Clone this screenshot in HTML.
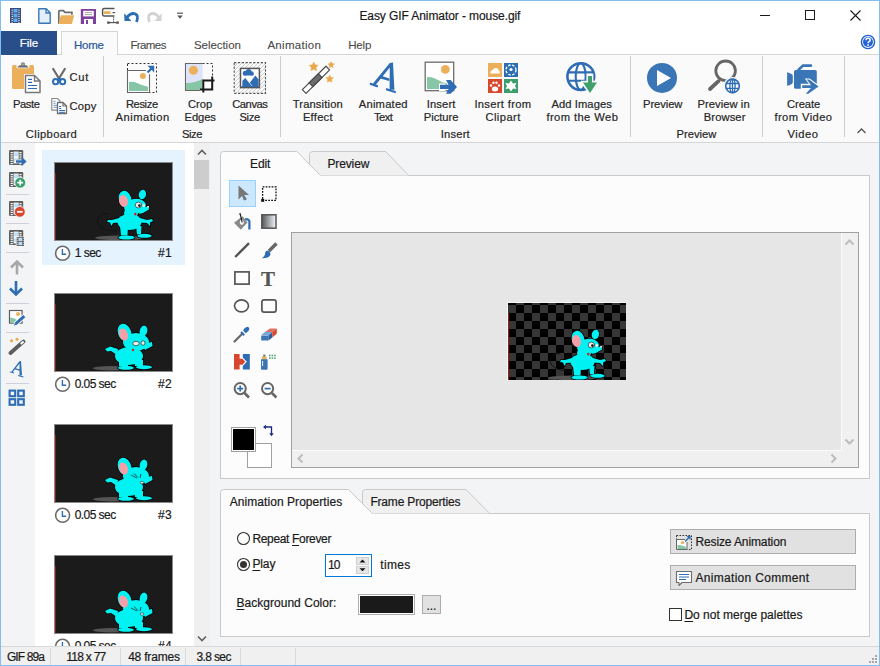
<!DOCTYPE html><html><head><meta charset="utf-8"><style>html,body{margin:0;padding:0;width:880px;height:666px;overflow:hidden;background:#f3f4f6}#w{position:relative;width:880px;height:666px;overflow:hidden}#w>div,#w>svg,#w>span{position:absolute}.t{font-family:"Liberation Sans", sans-serif;white-space:nowrap;line-height:16px;-webkit-text-stroke:0.2px currentColor}</style></head><body><div id="w"><svg width="0" height="0" style="left:0;top:0"><defs><symbol id="mouse0" width="118" height="77" viewBox="0 0 118 77"><g transform="translate(0,0)"><ellipse cx="64" cy="74.8" rx="24" ry="2.3" fill="#555"/><path d="M62 68C48 68 40 62 43 55C45 51 49 50 52 51" fill="none" stroke="#111" stroke-width="1"/><g fill="#000" stroke="#000" stroke-width="1.4"><ellipse cx="74.5" cy="59.0" rx="12" ry="8"/><ellipse cx="76" cy="50.0" rx="7" ry="6"/><ellipse cx="80" cy="43.5" rx="11" ry="7.5" transform="rotate(-10 80 43.5)"/><path d="M85 46L93.5 43L94 46.5L88 50L84 51Z"/><ellipse cx="70" cy="36" rx="6.3" ry="8.3" transform="rotate(-15 70 36)"/><ellipse cx="87.4" cy="31.5" rx="3.6" ry="4.8" transform="rotate(15 87.4 31.5)"/><path d="M64 55L57 57L53 57L52 59L55 59.5L56.5 63L58 60L64 59.5Z"/><path d="M85 55L92 57L97 56L98 58L95 59.5L95 63L92 60L85 59.5Z"/><path d="M65 63L73 63L72.5 72.5L66 72.5Z"/><ellipse cx="71.5" cy="74.5" rx="8.2" ry="2"/><path d="M81 63L86.5 63L86 71L82 71.5Z"/><ellipse cx="89.5" cy="72.8" rx="7.3" ry="2"/></g><g fill="#00f2f2"><ellipse cx="74.5" cy="59.0" rx="12" ry="8"/><ellipse cx="76" cy="50.0" rx="7" ry="6"/><ellipse cx="80" cy="43.5" rx="11" ry="7.5" transform="rotate(-10 80 43.5)"/><path d="M85 46L93.5 43L94 46.5L88 50L84 51Z"/><ellipse cx="70" cy="36" rx="6.3" ry="8.3" transform="rotate(-15 70 36)"/><ellipse cx="87.4" cy="31.5" rx="3.6" ry="4.8" transform="rotate(15 87.4 31.5)"/><path d="M64 55L57 57L53 57L52 59L55 59.5L56.5 63L58 60L64 59.5Z"/><path d="M85 55L92 57L97 56L98 58L95 59.5L95 63L92 60L85 59.5Z"/><path d="M65 63L73 63L72.5 72.5L66 72.5Z"/><ellipse cx="71.5" cy="74.5" rx="8.2" ry="2"/><path d="M81 63L86.5 63L86 71L82 71.5Z"/><ellipse cx="89.5" cy="72.8" rx="7.3" ry="2"/></g><ellipse cx="68.5" cy="38" rx="4.4" ry="6" transform="rotate(-15 68.5 38)" fill="#f4a0a8"/><ellipse cx="83.4" cy="42" rx="3.2" ry="2.9" fill="#f0f0f0" stroke="#111" stroke-width="0.6"/><circle cx="84.4" cy="42.6" r="1.3" fill="#111"/><ellipse cx="88.8" cy="42.4" rx="1.2" ry="1.6" fill="#f0f0f0"/><circle cx="93.1" cy="43.7" r="1" fill="#ddd"/><circle cx="80.3" cy="51.1" r="1.3" fill="#d02020"/></g></symbol><symbol id="mouse1" width="118" height="77" viewBox="0 0 118 77"><ellipse cx="56" cy="74.2" rx="18" ry="2.2" fill="#555"/><g fill="#000" stroke="#000" stroke-width="1.4"><ellipse cx="74" cy="62" rx="14" ry="9"/><ellipse cx="81" cy="48" rx="13" ry="9"/><path d="M88 50L97 48L97.5 52L90 56Z"/><ellipse cx="69.5" cy="38.5" rx="6.6" ry="9" transform="rotate(-20 69.5 38.5)"/><ellipse cx="88.5" cy="37" rx="3.8" ry="5.5" transform="rotate(15 88.5 37)"/><path d="M63 55L55 52.5L50 55L52 57.5L56 57L62 61Z"/><path d="M64 66H73V72.5H64Z"/><ellipse cx="71" cy="73.8" rx="8" ry="2"/><path d="M80 66H88V72H80Z"/><ellipse cx="89" cy="73.2" rx="8" ry="2"/></g><g fill="#00f2f2"><ellipse cx="74" cy="62" rx="14" ry="9"/><ellipse cx="81" cy="48" rx="13" ry="9"/><path d="M88 50L97 48L97.5 52L90 56Z"/><ellipse cx="69.5" cy="38.5" rx="6.6" ry="9" transform="rotate(-20 69.5 38.5)"/><ellipse cx="88.5" cy="37" rx="3.8" ry="5.5" transform="rotate(15 88.5 37)"/><path d="M63 55L55 52.5L50 55L52 57.5L56 57L62 61Z"/><path d="M64 66H73V72.5H64Z"/><ellipse cx="71" cy="73.8" rx="8" ry="2"/><path d="M80 66H88V72H80Z"/><ellipse cx="89" cy="73.2" rx="8" ry="2"/></g><ellipse cx="68.5" cy="40.5" rx="4.3" ry="6.3" transform="rotate(-20 68.5 40.5)" fill="#f4a0a8"/><ellipse cx="81" cy="49.5" rx="3.2" ry="2.2" fill="#eee" stroke="#111" stroke-width="0.6"/><ellipse cx="88" cy="49" rx="2" ry="2.2" fill="#eee" stroke="#111" stroke-width="0.6"/><circle cx="78" cy="56" r="1.2" fill="#d02020"/></symbol><symbol id="mouse2" width="118" height="77" viewBox="0 0 118 77"><ellipse cx="56" cy="74.2" rx="18" ry="2.2" fill="#555"/><g fill="#000" stroke="#000" stroke-width="1.4"><ellipse cx="74" cy="62" rx="14" ry="9"/><ellipse cx="81" cy="51" rx="13" ry="9"/><path d="M88 53L97 51L97.5 55L90 59Z"/><ellipse cx="69.5" cy="41.5" rx="6.6" ry="9" transform="rotate(-20 69.5 41.5)"/><ellipse cx="88.5" cy="40" rx="3.8" ry="5.5" transform="rotate(15 88.5 40)"/><path d="M63 55L55 52.5L50 55L52 57.5L56 57L62 61Z"/><path d="M64 66H73V72.5H64Z"/><ellipse cx="71" cy="73.8" rx="8" ry="2"/><path d="M80 66H88V72H80Z"/><ellipse cx="89" cy="73.2" rx="8" ry="2"/></g><g fill="#00f2f2"><ellipse cx="74" cy="62" rx="14" ry="9"/><ellipse cx="81" cy="51" rx="13" ry="9"/><path d="M88 53L97 51L97.5 55L90 59Z"/><ellipse cx="69.5" cy="41.5" rx="6.6" ry="9" transform="rotate(-20 69.5 41.5)"/><ellipse cx="88.5" cy="40" rx="3.8" ry="5.5" transform="rotate(15 88.5 40)"/><path d="M63 55L55 52.5L50 55L52 57.5L56 57L62 61Z"/><path d="M64 66H73V72.5H64Z"/><ellipse cx="71" cy="73.8" rx="8" ry="2"/><path d="M80 66H88V72H80Z"/><ellipse cx="89" cy="73.2" rx="8" ry="2"/></g><ellipse cx="68.5" cy="43.5" rx="4.3" ry="6.3" transform="rotate(-20 68.5 43.5)" fill="#f4a0a8"/><path d="M76 50L82 53M79 48.5L83 52.5M86 49L85 53" stroke="#111" stroke-width="0.7"/><ellipse cx="87" cy="57.6" rx="1.8" ry="1.2" fill="#eee" stroke="#111" stroke-width="0.5"/></symbol><symbol id="mouse3" width="118" height="77" viewBox="0 0 118 77"><ellipse cx="56" cy="74.2" rx="18" ry="2.2" fill="#555"/><g fill="#000" stroke="#000" stroke-width="1.4"><ellipse cx="74" cy="62" rx="14" ry="9"/><ellipse cx="81" cy="53" rx="13" ry="9"/><path d="M88 55L97 53L97.5 57L90 61Z"/><ellipse cx="69.5" cy="43.5" rx="6.6" ry="9" transform="rotate(-20 69.5 43.5)"/><ellipse cx="88.5" cy="42" rx="3.8" ry="5.5" transform="rotate(15 88.5 42)"/><path d="M63 55L55 52.5L50 55L52 57.5L56 57L62 61Z"/><path d="M64 66H73V72.5H64Z"/><ellipse cx="71" cy="73.8" rx="8" ry="2"/><path d="M80 66H88V72H80Z"/><ellipse cx="89" cy="73.2" rx="8" ry="2"/></g><g fill="#00f2f2"><ellipse cx="74" cy="62" rx="14" ry="9"/><ellipse cx="81" cy="53" rx="13" ry="9"/><path d="M88 55L97 53L97.5 57L90 61Z"/><ellipse cx="69.5" cy="43.5" rx="6.6" ry="9" transform="rotate(-20 69.5 43.5)"/><ellipse cx="88.5" cy="42" rx="3.8" ry="5.5" transform="rotate(15 88.5 42)"/><path d="M63 55L55 52.5L50 55L52 57.5L56 57L62 61Z"/><path d="M64 66H73V72.5H64Z"/><ellipse cx="71" cy="73.8" rx="8" ry="2"/><path d="M80 66H88V72H80Z"/><ellipse cx="89" cy="73.2" rx="8" ry="2"/></g><ellipse cx="68.5" cy="45.5" rx="4.3" ry="6.3" transform="rotate(-20 68.5 45.5)" fill="#f4a0a8"/><path d="M76 52L82 55M79 50.5L83 54.5M86 51L85 55" stroke="#111" stroke-width="0.7"/><ellipse cx="87" cy="58.0" rx="1.8" ry="1.2" fill="#eee" stroke="#111" stroke-width="0.5"/></symbol></defs></svg><div style="left:0px;top:0px;width:880px;height:666px;background:#f3f4f6"></div>
<div style="left:0px;top:0px;width:880px;height:54px;background:#ffffff"></div>
<div style="left:0px;top:54px;width:880px;height:88px;background:#fafafa"></div>
<div style="left:0px;top:54px;width:880px;height:1px;background:#d5d5d5"></div>
<div style="left:0px;top:142px;width:880px;height:1px;background:#d5d5d5"></div>
<div style="left:1px;top:143px;width:34px;height:503px;background:#f3f4f6"></div>
<div style="left:35px;top:143px;width:159px;height:503px;background:#ffffff"></div>
<div style="left:194px;top:143px;width:16px;height:503px;background:#f0f0f0"></div>
<span class="t" style="left:359.40px;top:8px;font-size:12px;letter-spacing:-0.085px;color:#1a1a1a;">Easy GIF Animator - mouse.gif</span>
<div style="left:760px;top:15px;width:10px;height:1px;background:#1a1a1a"></div>
<div style="left:805px;top:10px;width:10px;height:10px;border:1px solid #1a1a1a;box-sizing:border-box"></div>
<svg style="left:850px;top:10px" width="11" height="11" viewBox="0 0 11 11"><path d="M0.5 0.5L10.5 10.5M10.5 0.5L0.5 10.5" stroke="#1a1a1a" stroke-width="1.1"/></svg>
<div style="left:1px;top:31px;width:56px;height:24px;background:#294f8b"></div>
<span class="t" style="left:19.80px;top:35px;font-size:11.5px;letter-spacing:-0.043px;color:#ffffff;">File</span>
<div style="left:61px;top:31px;width:57px;height:24px;background:#fafafa;border:1px solid #d5d5d5;border-bottom:none;box-sizing:border-box"></div>
<span class="t" style="left:74.00px;top:37px;font-size:11.5px;letter-spacing:-0.225px;color:#2b579a;">Home</span>
<span class="t" style="left:130.40px;top:37px;font-size:11.5px;letter-spacing:-0.594px;color:#4a4a4a;-webkit-text-stroke:0.1px currentColor">Frames</span>
<span class="t" style="left:193.90px;top:37px;font-size:11.5px;letter-spacing:-0.038px;color:#4a4a4a;-webkit-text-stroke:0.1px currentColor">Selection</span>
<span class="t" style="left:267.40px;top:37px;font-size:11.5px;letter-spacing:0.296px;color:#4a4a4a;-webkit-text-stroke:0.1px currentColor">Animation</span>
<span class="t" style="left:348.20px;top:37px;font-size:11.5px;letter-spacing:-0.150px;color:#4a4a4a;-webkit-text-stroke:0.1px currentColor">Help</span>
<span class="t" style="left:12.90px;top:96px;font-size:11.2px;letter-spacing:-0.410px;color:#262626;">Paste</span>
<span class="t" style="left:69.40px;top:69px;font-size:11.2px;letter-spacing:0.786px;color:#262626;">Cut</span>
<span class="t" style="left:69.40px;top:98px;font-size:11.2px;letter-spacing:0.285px;color:#262626;">Copy</span>
<span class="t" style="left:25.80px;top:126px;font-size:11.2px;letter-spacing:0.383px;color:#262626;">Clipboard</span>
<span class="t" style="left:125.90px;top:96px;font-size:11.2px;letter-spacing:-0.387px;color:#262626;">Resize</span>
<span class="t" style="left:115.60px;top:109px;font-size:11.2px;letter-spacing:0.475px;color:#262626;">Animation</span>
<span class="t" style="left:187.90px;top:96px;font-size:11.2px;letter-spacing:0.009px;color:#262626;">Crop</span>
<span class="t" style="left:184.60px;top:109px;font-size:11.2px;letter-spacing:-0.114px;color:#262626;">Edges</span>
<span class="t" style="left:232.20px;top:96px;font-size:11.2px;letter-spacing:-0.435px;color:#262626;">Canvas</span>
<span class="t" style="left:239.40px;top:109px;font-size:11.2px;letter-spacing:-0.329px;color:#262626;">Size</span>
<span class="t" style="left:182.10px;top:126px;font-size:11.2px;letter-spacing:-0.496px;color:#262626;">Size</span>
<span class="t" style="left:292.70px;top:96px;font-size:11.2px;letter-spacing:0.149px;color:#262626;">Transition</span>
<span class="t" style="left:302.90px;top:109px;font-size:11.2px;letter-spacing:0.254px;color:#262626;">Effect</span>
<span class="t" style="left:358.80px;top:96px;font-size:11.2px;letter-spacing:0.212px;color:#262626;">Animated</span>
<span class="t" style="left:373.90px;top:109px;font-size:11.2px;letter-spacing:-0.513px;color:#262626;">Text</span>
<span class="t" style="left:426.70px;top:96px;font-size:11.2px;letter-spacing:0.138px;color:#262626;">Insert</span>
<span class="t" style="left:423.80px;top:109px;font-size:11.2px;letter-spacing:-0.043px;color:#262626;">Picture</span>
<span class="t" style="left:474.40px;top:96px;font-size:11.2px;letter-spacing:0.318px;color:#262626;">Insert from</span>
<span class="t" style="left:485.40px;top:109px;font-size:11.2px;letter-spacing:0.440px;color:#262626;">Clipart</span>
<span class="t" style="left:551.40px;top:96px;font-size:11.2px;letter-spacing:0.082px;color:#262626;">Add Images</span>
<span class="t" style="left:546.40px;top:109px;font-size:11.2px;letter-spacing:0.417px;color:#262626;">from the Web</span>
<span class="t" style="left:440.70px;top:126px;font-size:11.2px;letter-spacing:0.198px;color:#262626;">Insert</span>
<span class="t" style="left:643.00px;top:96px;font-size:11.2px;letter-spacing:-0.072px;color:#262626;">Preview</span>
<span class="t" style="left:697.40px;top:96px;font-size:11.2px;letter-spacing:0.071px;color:#262626;">Preview in</span>
<span class="t" style="left:703.80px;top:109px;font-size:11.2px;letter-spacing:0.088px;color:#262626;">Browser</span>
<span class="t" style="left:787.10px;top:96px;font-size:11.2px;letter-spacing:-0.103px;color:#262626;">Create</span>
<span class="t" style="left:774.40px;top:109px;font-size:11.2px;letter-spacing:0.417px;color:#262626;">from Video</span>
<span class="t" style="left:676.40px;top:126px;font-size:11.2px;letter-spacing:0.028px;color:#262626;">Preview</span>
<span class="t" style="left:787.40px;top:126px;font-size:11.2px;letter-spacing:0.515px;color:#262626;">Video</span>
<div style="left:103px;top:56px;width:1px;height:81px;background:#cbcbcb"></div>
<div style="left:280px;top:56px;width:1px;height:81px;background:#cbcbcb"></div>
<div style="left:630px;top:56px;width:1px;height:81px;background:#cbcbcb"></div>
<div style="left:762px;top:56px;width:1px;height:81px;background:#cbcbcb"></div>
<div style="left:844px;top:56px;width:1px;height:81px;background:#cbcbcb"></div>
<svg style="left:856px;top:127px" width="11" height="8" viewBox="0 0 11 8"><path d="M1.5 6L5.5 2L9.5 6" fill="none" stroke="#555" stroke-width="1.3"/></svg>
<div style="left:6px;top:194px;width:23px;height:1px;background:#cfd0dc"></div>
<div style="left:6px;top:223px;width:23px;height:1px;background:#cfd0dc"></div>
<div style="left:6px;top:252px;width:23px;height:1px;background:#cfd0dc"></div>
<div style="left:6px;top:303px;width:23px;height:1px;background:#cfd0dc"></div>
<div style="left:6px;top:332px;width:23px;height:1px;background:#cfd0dc"></div>
<div style="left:6px;top:383px;width:23px;height:1px;background:#cfd0dc"></div>
<div style="left:42px;top:150px;width:143px;height:115px;background:#e5f3ff"></div>
<svg style="left:54px;top:162px" width="119" height="79" viewBox="0 0 119 79"><rect x="0.5" y="0.5" width="118" height="78" fill="#1b1b1b" stroke="#8a8a8a"/><rect x="1" y="11" width="1" height="67" fill="#8a1a0e"/><use href="#mouse0" x="1" y="1"/></svg>
<svg style="left:54px;top:245px" width="18" height="17" viewBox="0 0 18 17"><circle cx="8.6" cy="8.3" r="7" fill="#fff" stroke="#6b6b6b" stroke-width="1.6"/><path d="M8.4 4V9.2H12.2" fill="none" stroke="#2e6db4" stroke-width="1.4"/></svg>
<span class="t" style="left:74.70px;top:245px;font-size:12px;letter-spacing:-0.520px;color:#1a1a1a;">1 sec</span>
<span class="t" style="left:158.10px;top:245px;font-size:12px;letter-spacing:0.154px;color:#1a1a1a;">#1</span>
<svg style="left:54px;top:293px" width="119" height="79" viewBox="0 0 119 79"><rect x="0.5" y="0.5" width="118" height="78" fill="#1b1b1b" stroke="#8a8a8a"/><rect x="1" y="11" width="1" height="67" fill="#8a1a0e"/><use href="#mouse1" x="1" y="1"/></svg>
<svg style="left:54px;top:376px" width="18" height="17" viewBox="0 0 18 17"><circle cx="8.6" cy="8.3" r="7" fill="#fff" stroke="#6b6b6b" stroke-width="1.6"/><path d="M8.4 4V9.2H12.2" fill="none" stroke="#2e6db4" stroke-width="1.4"/></svg>
<span class="t" style="left:74.70px;top:376px;font-size:12px;letter-spacing:-0.551px;color:#1a1a1a;">0.05 sec</span>
<span class="t" style="left:158.10px;top:376px;font-size:12px;letter-spacing:0.154px;color:#1a1a1a;">#2</span>
<svg style="left:54px;top:424px" width="119" height="79" viewBox="0 0 119 79"><rect x="0.5" y="0.5" width="118" height="78" fill="#1b1b1b" stroke="#8a8a8a"/><rect x="1" y="11" width="1" height="67" fill="#8a1a0e"/><use href="#mouse2" x="1" y="1"/></svg>
<svg style="left:54px;top:507px" width="18" height="17" viewBox="0 0 18 17"><circle cx="8.6" cy="8.3" r="7" fill="#fff" stroke="#6b6b6b" stroke-width="1.6"/><path d="M8.4 4V9.2H12.2" fill="none" stroke="#2e6db4" stroke-width="1.4"/></svg>
<span class="t" style="left:74.70px;top:507px;font-size:12px;letter-spacing:-0.551px;color:#1a1a1a;">0.05 sec</span>
<span class="t" style="left:158.10px;top:507px;font-size:12px;letter-spacing:0.154px;color:#1a1a1a;">#3</span>
<svg style="left:54px;top:555px" width="119" height="79" viewBox="0 0 119 79"><rect x="0.5" y="0.5" width="118" height="78" fill="#1b1b1b" stroke="#8a8a8a"/><rect x="1" y="11" width="1" height="67" fill="#8a1a0e"/><use href="#mouse3" x="1" y="1"/></svg>
<svg style="left:54px;top:638px" width="18" height="17" viewBox="0 0 18 17"><circle cx="8.6" cy="8.3" r="7" fill="#fff" stroke="#6b6b6b" stroke-width="1.6"/><path d="M8.4 4V9.2H12.2" fill="none" stroke="#2e6db4" stroke-width="1.4"/></svg>
<span class="t" style="left:74.70px;top:638px;font-size:12px;letter-spacing:-0.551px;color:#1a1a1a;">0.05 sec</span>
<span class="t" style="left:158.10px;top:638px;font-size:12px;letter-spacing:0.154px;color:#1a1a1a;">#4</span>
<svg style="left:196px;top:148px" width="12" height="9" viewBox="0 0 12 9"><path d="M2 6.5L6 2.5L10 6.5" fill="none" stroke="#606060" stroke-width="1.6"/></svg>
<div style="left:194px;top:160px;width:15px;height:29px;background:#cdcdcd"></div>
<svg style="left:196px;top:634px" width="12" height="9" viewBox="0 0 12 9"><path d="M2 2.5L6 6.5L10 2.5" fill="none" stroke="#606060" stroke-width="1.6"/></svg>
<div style="left:220px;top:175px;width:650px;height:304px;background:#fcfcfc;border:1px solid #c9c9c9;box-sizing:border-box"></div>
<svg style="left:215px;top:146px" width="200" height="32" viewBox="0 0 200 32"><path d="M94.5 29.5V8.5Q94.5 5.5 97.5 5.5H170.6L193.75 29.5" fill="#f0f0f0" stroke="#c9c9c9"/><path d="M5.5 29.5V8.5Q5.5 5.5 8.5 5.5H81.9L105.4 29.5" fill="#fcfcfc" stroke="#c9c9c9"/><rect x="6" y="29" width="99" height="3" fill="#fcfcfc"/></svg>
<span class="t" style="left:250.00px;top:156px;font-size:12px;letter-spacing:-0.092px;color:#1a1a1a;">Edit</span>
<span class="t" style="left:327.40px;top:156px;font-size:12px;letter-spacing:-0.113px;color:#1a1a1a;">Preview</span>
<div style="left:229px;top:180px;width:27px;height:27px;background:#cce8ff;border:1px solid #99d1ff;box-sizing:border-box"></div>
<div style="left:291px;top:232px;width:568px;height:236px;background:#e6e6e6;border:1px solid #a0a0a0;box-sizing:border-box"></div>
<div style="left:841px;top:233px;width:17px;height:234px;background:#fbfbfb"></div>
<div style="left:292px;top:450px;width:566px;height:17px;background:#fbfbfb"></div>
<div style="left:842px;top:233px;width:16px;height:234px;background:#f0f0f0"></div>
<div style="left:292px;top:451px;width:566px;height:16px;background:#f0f0f0"></div>
<svg style="left:844px;top:238px" width="12" height="9" viewBox="0 0 12 9"><path d="M1.5 6.5L5.5 2.5L9.5 6.5" fill="none" stroke="#bdbdbd" stroke-width="2"/></svg>
<svg style="left:844px;top:437px" width="12" height="9" viewBox="0 0 12 9"><path d="M1.5 2.5L5.5 6.5L9.5 2.5" fill="none" stroke="#bdbdbd" stroke-width="2"/></svg>
<svg style="left:296px;top:453px" width="9" height="12" viewBox="0 0 9 12"><path d="M6.5 1.5L2.5 5.5L6.5 9.5" fill="none" stroke="#bdbdbd" stroke-width="2"/></svg>
<svg style="left:829px;top:453px" width="9" height="12" viewBox="0 0 9 12"><path d="M2.5 1.5L6.5 5.5L2.5 9.5" fill="none" stroke="#bdbdbd" stroke-width="2"/></svg>
<div style="left:507px;top:302px;width:120px;height:1px;background:#f6f6f6"></div>
<div style="left:507px;top:302px;width:1px;height:79px;background:#f6f6f6"></div>
<svg style="left:508px;top:303px" width="118" height="77" viewBox="0 0 118 77"><rect width="118" height="77" fill="#000"/><g fill="#363636"><rect x="8" y="-6" width="8" height="8"/><rect x="24" y="-6" width="8" height="8"/><rect x="40" y="-6" width="8" height="8"/><rect x="56" y="-6" width="8" height="8"/><rect x="72" y="-6" width="8" height="8"/><rect x="88" y="-6" width="8" height="8"/><rect x="104" y="-6" width="8" height="8"/><rect x="0" y="2" width="8" height="8"/><rect x="16" y="2" width="8" height="8"/><rect x="32" y="2" width="8" height="8"/><rect x="48" y="2" width="8" height="8"/><rect x="64" y="2" width="8" height="8"/><rect x="80" y="2" width="8" height="8"/><rect x="96" y="2" width="8" height="8"/><rect x="112" y="2" width="8" height="8"/><rect x="8" y="10" width="8" height="8"/><rect x="24" y="10" width="8" height="8"/><rect x="40" y="10" width="8" height="8"/><rect x="56" y="10" width="8" height="8"/><rect x="72" y="10" width="8" height="8"/><rect x="88" y="10" width="8" height="8"/><rect x="104" y="10" width="8" height="8"/><rect x="0" y="18" width="8" height="8"/><rect x="16" y="18" width="8" height="8"/><rect x="32" y="18" width="8" height="8"/><rect x="48" y="18" width="8" height="8"/><rect x="64" y="18" width="8" height="8"/><rect x="80" y="18" width="8" height="8"/><rect x="96" y="18" width="8" height="8"/><rect x="112" y="18" width="8" height="8"/><rect x="8" y="26" width="8" height="8"/><rect x="24" y="26" width="8" height="8"/><rect x="40" y="26" width="8" height="8"/><rect x="56" y="26" width="8" height="8"/><rect x="72" y="26" width="8" height="8"/><rect x="88" y="26" width="8" height="8"/><rect x="104" y="26" width="8" height="8"/><rect x="0" y="34" width="8" height="8"/><rect x="16" y="34" width="8" height="8"/><rect x="32" y="34" width="8" height="8"/><rect x="48" y="34" width="8" height="8"/><rect x="64" y="34" width="8" height="8"/><rect x="80" y="34" width="8" height="8"/><rect x="96" y="34" width="8" height="8"/><rect x="112" y="34" width="8" height="8"/><rect x="8" y="42" width="8" height="8"/><rect x="24" y="42" width="8" height="8"/><rect x="40" y="42" width="8" height="8"/><rect x="56" y="42" width="8" height="8"/><rect x="72" y="42" width="8" height="8"/><rect x="88" y="42" width="8" height="8"/><rect x="104" y="42" width="8" height="8"/><rect x="0" y="50" width="8" height="8"/><rect x="16" y="50" width="8" height="8"/><rect x="32" y="50" width="8" height="8"/><rect x="48" y="50" width="8" height="8"/><rect x="64" y="50" width="8" height="8"/><rect x="80" y="50" width="8" height="8"/><rect x="96" y="50" width="8" height="8"/><rect x="112" y="50" width="8" height="8"/><rect x="8" y="58" width="8" height="8"/><rect x="24" y="58" width="8" height="8"/><rect x="40" y="58" width="8" height="8"/><rect x="56" y="58" width="8" height="8"/><rect x="72" y="58" width="8" height="8"/><rect x="88" y="58" width="8" height="8"/><rect x="104" y="58" width="8" height="8"/><rect x="0" y="66" width="8" height="8"/><rect x="16" y="66" width="8" height="8"/><rect x="32" y="66" width="8" height="8"/><rect x="48" y="66" width="8" height="8"/><rect x="64" y="66" width="8" height="8"/><rect x="80" y="66" width="8" height="8"/><rect x="96" y="66" width="8" height="8"/><rect x="112" y="66" width="8" height="8"/><rect x="8" y="74" width="8" height="8"/><rect x="24" y="74" width="8" height="8"/><rect x="40" y="74" width="8" height="8"/><rect x="56" y="74" width="8" height="8"/><rect x="72" y="74" width="8" height="8"/><rect x="88" y="74" width="8" height="8"/><rect x="104" y="74" width="8" height="8"/></g><rect x="0" y="10" width="1" height="67" fill="#a01a0e"/><use href="#mouse0"/></svg>
<div style="left:247px;top:443px;width:25px;height:25px;background:#fff;border:1px solid #a0a0a0;box-sizing:border-box"></div>
<div style="left:231px;top:427px;width:25px;height:25px;background:#000;border:1px solid #a0a0a0;box-shadow:inset 0 0 0 1px #fff;box-sizing:border-box"></div>
<svg style="left:262px;top:424px" width="13" height="13" viewBox="0 0 13 13"><path d="M3 3H9.5V10" fill="none" stroke="#1a2a80" stroke-width="1.3"/><path d="M1 3L4 0.8V5.2Z M9.5 12.2L7.3 9.2H11.7Z" fill="#1a2a80"/></svg>
<div style="left:220px;top:513px;width:650px;height:124px;background:#fcfcfc;border:1px solid #c9c9c9;box-sizing:border-box"></div>
<svg style="left:215px;top:484px" width="280" height="32" viewBox="0 0 280 32"><path d="M147.5 29.5V8.5Q147.5 5.5 150.5 5.5H251L274.8 29.5" fill="#f0f0f0" stroke="#c9c9c9"/><path d="M5.5 29.5V8.5Q5.5 5.5 8.5 5.5H133.6L157.4 29.5" fill="#fcfcfc" stroke="#c9c9c9"/><rect x="6" y="29" width="151" height="3" fill="#fcfcfc"/></svg>
<span class="t" style="left:229.80px;top:494px;font-size:12px;letter-spacing:0.054px;color:#1a1a1a;">Animation Properties</span>
<span class="t" style="left:370.40px;top:494px;font-size:12px;letter-spacing:-0.179px;color:#1a1a1a;">Frame Properties</span>
<svg style="left:236px;top:531px" width="15" height="15" viewBox="0 0 15 15"><circle cx="7.5" cy="7.5" r="6" fill="#fff" stroke="#333" stroke-width="1.1"/></svg>
<svg style="left:236px;top:557px" width="15" height="15" viewBox="0 0 15 15"><circle cx="7.5" cy="7.5" r="6" fill="#fff" stroke="#333" stroke-width="1.1"/><circle cx="7.5" cy="7.5" r="3.5" fill="#333"/></svg>
<span class="t" style="left:252.40px;top:531px;font-size:12px;letter-spacing:-0.336px;color:#1a1a1a;">Repeat <span style="text-decoration:underline;text-underline-offset:2px">F</span>orever</span>
<span class="t" style="left:252.40px;top:556px;font-size:12px;letter-spacing:-0.115px;color:#1a1a1a;"><span style="text-decoration:underline;text-underline-offset:2px">P</span>lay</span>
<div style="left:325px;top:554px;width:47px;height:23px;background:#fff;border:1px solid #0078d7;box-sizing:border-box"></div>
<div style="left:356px;top:557px;width:13px;height:8px;background:#e6e6e6;border:1px solid #cfcfcf;box-sizing:border-box"></div>
<div style="left:356px;top:566px;width:13px;height:8px;background:#e6e6e6;border:1px solid #cfcfcf;box-sizing:border-box"></div>
<svg style="left:356px;top:557px" width="13" height="17" viewBox="0 0 13 17"><path d="M3.5 5.6L6.5 2.6L9.5 5.6Z M3.5 11.2L6.5 14.2L9.5 11.2Z" fill="#111"/></svg>
<span class="t" style="left:328.00px;top:557px;font-size:12px;letter-spacing:-0.946px;color:#1a1a1a;">10</span>
<span class="t" style="left:380.30px;top:557px;font-size:12px;letter-spacing:0.333px;color:#1a1a1a;">times</span>
<span class="t" style="left:236.40px;top:595px;font-size:12px;letter-spacing:0.039px;color:#1a1a1a;"><span style="text-decoration:underline;text-underline-offset:2px">B</span>ackground Color:</span>
<div style="left:358px;top:594px;width:57px;height:21px;background:#1a1a1a;border:1px solid #adadad;box-shadow:inset 0 0 0 1px #fff;box-sizing:border-box"></div>
<div style="left:422px;top:595px;width:19px;height:19px;background:#e1e1e1;border:1px solid #adadad;box-sizing:border-box"></div>
<span class="t" style="left:426.40px;top:598px;font-size:12px;letter-spacing:-0.001px;color:#1a1a1a;">...</span>
<div style="left:670px;top:529px;width:186px;height:25px;background:#e1e1e1;border:1px solid #adadad;box-sizing:border-box"></div>
<div style="left:670px;top:565px;width:186px;height:25px;background:#e1e1e1;border:1px solid #adadad;box-sizing:border-box"></div>
<span class="t" style="left:695.40px;top:534px;font-size:12px;letter-spacing:-0.114px;color:#1a1a1a;">Resize Animation</span>
<span class="t" style="left:695.40px;top:570px;font-size:12px;letter-spacing:0.315px;color:#1a1a1a;">Animation Comment</span>
<div style="left:669px;top:608px;width:13px;height:13px;background:#fff;border:1px solid #333;box-sizing:border-box"></div>
<span class="t" style="left:684.40px;top:607px;font-size:12px;letter-spacing:-0.003px;color:#1a1a1a;"><span style="text-decoration:underline;text-underline-offset:2px">D</span>o not merge palettes</span>
<div style="left:0px;top:646px;width:880px;height:1px;background:#d9d9d9"></div>
<div style="left:0px;top:647px;width:880px;height:19px;background:#f0f0f0"></div>
<div style="left:50px;top:648px;width:1px;height:17px;background:#d9d9d9"></div>
<div style="left:120px;top:648px;width:1px;height:17px;background:#d9d9d9"></div>
<div style="left:185px;top:648px;width:1px;height:17px;background:#d9d9d9"></div>
<div style="left:240px;top:648px;width:1px;height:17px;background:#d9d9d9"></div>
<div style="left:295px;top:648px;width:1px;height:17px;background:#d9d9d9"></div>
<span class="t" style="left:6.90px;top:649px;font-size:12px;letter-spacing:-0.892px;color:#1a1a1a;">GIF 89a</span>
<span class="t" style="left:66.30px;top:649px;font-size:12px;letter-spacing:-0.735px;color:#1a1a1a;">118 x 77</span>
<span class="t" style="left:128.15px;top:649px;font-size:12px;letter-spacing:-0.200px;color:#1a1a1a;">48 frames</span>
<span class="t" style="left:196.40px;top:649px;font-size:12px;letter-spacing:-0.614px;color:#1a1a1a;">3.8 sec</span>
<svg style="left:0;top:0" width="880" height="666" viewBox="0 0 880 666"><g fill="#a8a8a8"><rect x="875" y="655" width="2" height="2"/><rect x="872" y="658" width="2" height="2"/><rect x="875" y="658" width="2" height="2"/><rect x="869" y="661" width="2" height="2"/><rect x="872" y="661" width="2" height="2"/><rect x="875" y="661" width="2" height="2"/></g></svg>
<div style="left:0px;top:0px;width:880px;height:1px;background:#84bdf2"></div>
<div style="left:0px;top:0px;width:1px;height:666px;background:#84bdf2"></div>
<div style="left:879px;top:0px;width:1px;height:666px;background:#84bdf2"></div>
<div style="left:0px;top:665px;width:880px;height:1px;background:#84bdf2"></div>
<svg style="left:10px;top:8px" width="11" height="15" viewBox="0 0 11 15"><rect width="11" height="15" fill="#3c4b78"/><rect x="1.6" y="1.60" width="1.1" height="1.1" fill="#fff"/><rect x="8.4" y="1.60" width="1.1" height="1.1" fill="#fff"/><rect x="1.6" y="3.70" width="1.1" height="1.1" fill="#fff"/><rect x="8.4" y="3.70" width="1.1" height="1.1" fill="#fff"/><rect x="1.6" y="5.80" width="1.1" height="1.1" fill="#fff"/><rect x="8.4" y="5.80" width="1.1" height="1.1" fill="#fff"/><rect x="1.6" y="7.90" width="1.1" height="1.1" fill="#fff"/><rect x="8.4" y="7.90" width="1.1" height="1.1" fill="#fff"/><rect x="1.6" y="10.00" width="1.1" height="1.1" fill="#fff"/><rect x="8.4" y="10.00" width="1.1" height="1.1" fill="#fff"/><rect x="1.6" y="12.10" width="1.1" height="1.1" fill="#fff"/><rect x="8.4" y="12.10" width="1.1" height="1.1" fill="#fff"/><rect x="1.6" y="14.20" width="1.1" height="1.1" fill="#fff"/><rect x="8.4" y="14.20" width="1.1" height="1.1" fill="#fff"/><rect x="3.5" y="1" width="4" height="3.6" fill="#5aaef5"/><rect x="3.5" y="5.6" width="4" height="3.8" fill="#5aaef5"/><rect x="3.5" y="10.4" width="4" height="3.6" fill="#5aaef5"/></svg>
<svg style="left:38px;top:8px" width="13" height="16" viewBox="0 0 13 16"><path d="M0.8 0.8H8.2L12.2 4.8V15.2H0.8Z" fill="#e3f0fb" stroke="#3b78b8" stroke-width="1.4" stroke-linejoin="round"/><path d="M8 1V5H12" fill="none" stroke="#3b78b8" stroke-width="1.3"/></svg>
<svg style="left:57px;top:9px" width="18" height="16" viewBox="0 0 18 16"><path d="M1.8 15V2.6Q1.8 1.6 2.8 1.6H6.4L7.9 3.3H14.9V5.8" fill="none" stroke="#6d6d6d" stroke-width="1.7"/><path d="M3.8 6.2H17.2L14.9 14.9H1.5Z" fill="#ecb05c"/></svg>
<svg style="left:80px;top:8px" width="17" height="17" viewBox="0 0 17 17"><rect x="0.8" y="1" width="15.2" height="15" fill="#7e3f9d"/><rect x="3.2" y="2.8" width="10.6" height="5.6" fill="#fff"/><path d="M5 4.6H12M5 6.6H12" stroke="#9a9a9a" stroke-width="0.9"/><rect x="4" y="11" width="9" height="5" fill="#fff"/><rect x="6" y="12" width="2" height="4" fill="#7e3f9d"/></svg>
<svg style="left:101px;top:7px" width="18" height="18" viewBox="0 0 18 18"><path d="M13.5 1.6H3Q1.6 1.6 1.6 3V7.6Q1.6 9 3 9H13.5" fill="none" stroke="#555" stroke-width="1.5"/><rect x="3" y="4.2" width="6.6" height="2.8" fill="#ecb05c"/><path d="M11.5 5.6H14.2" stroke="#555" stroke-width="1.2"/><path d="M12.6 10.2V15" stroke="#555" stroke-width="1.1" stroke-dasharray="1.2 0.8"/><path d="M7.5 15.6H16.5" stroke="#555" stroke-width="1.2"/><rect x="6.2" y="14.4" width="2.4" height="2.4" fill="#555"/><rect x="15.4" y="14.4" width="2.4" height="2.4" fill="#555"/></svg>
<svg style="left:123px;top:10px" width="18" height="14" viewBox="0 0 18 14"><path d="M4 7.5Q8 2 12.5 4Q16 6 13.5 12" fill="none" stroke="#2e6db4" stroke-width="2.8"/><path d="M1.2 3.2L1.5 11H8.5Z" fill="#2e6db4"/></svg>
<svg style="left:145px;top:10px" width="18" height="14" viewBox="0 0 18 14"><path d="M14 7.5Q10 2 5.5 4Q2 6 4.5 12" fill="none" stroke="#d2d2d2" stroke-width="2.8"/><path d="M16.8 3.2L16.5 11H9.5Z" fill="#d2d2d2"/></svg>
<svg style="left:176px;top:12px" width="8" height="8" viewBox="0 0 8 8"><path d="M1 1.2H7" stroke="#555" stroke-width="1.2"/><path d="M1.2 3.5H6.8L4 6.8Z" fill="#555"/></svg>
<svg style="left:860px;top:34px" width="16" height="16" viewBox="0 0 16 16"><circle cx="8" cy="8" r="6.6" fill="#fff" stroke="#1e60d0" stroke-width="1.4"/><circle cx="8" cy="8" r="5" fill="#2563d3"/><path d="M6 6.2Q6 4.2 8.1 4.2Q10.2 4.2 10.2 6Q10.2 7.2 8.8 7.8Q8.1 8.2 8.1 9.3" fill="none" stroke="#fff" stroke-width="1.5"/><rect x="7.3" y="10.3" width="1.6" height="1.6" fill="#fff"/></svg>
<svg style="left:8px;top:58px" width="42" height="40" viewBox="0 0 42 40"><rect x="4" y="7" width="22" height="24" rx="1.5" fill="#ecb05c"/><rect x="8.5" y="5" width="13" height="5.2" rx="1" fill="#fafafa"/><path d="M9.2 9.6H20.8L18.5 7.2H11.5Z" fill="#6a6a6a"/><rect x="13.2" y="4.6" width="3.6" height="3" rx="1.2" fill="#6a6a6a"/><rect x="14.3" y="5.6" width="1.4" height="1" fill="#fafafa"/><rect x="16" y="16" width="18" height="20" fill="#fafafa"/><path d="M17.5 17.5H26.5L32 23V34.5H17.5Z" fill="#fff" stroke="#777" stroke-width="1.5" stroke-linejoin="round"/><path d="M26.5 17.5V23H32" fill="none" stroke="#777" stroke-width="1.4"/><path d="M20 21.3H24M20 24.4H24M20 27.5H29M20 30.5H29" stroke="#2e6db4" stroke-width="1.2"/></svg>
<svg style="left:50px;top:66px" width="18" height="20" viewBox="0 0 18 20"><path d="M3.2 3L9 12.5M14.8 3L9 12.5" stroke="#6a6a6a" stroke-width="2.2" stroke-linecap="round"/><circle cx="5.6" cy="15.7" r="2.6" fill="none" stroke="#2e6db4" stroke-width="2"/><circle cx="12.6" cy="15.7" r="2.6" fill="none" stroke="#2e6db4" stroke-width="2"/><rect x="7.5" y="12" width="3.2" height="3.5" fill="#2e6db4"/></svg>
<svg style="left:50px;top:97px" width="19" height="18" viewBox="0 0 19 18"><path d="M1.8 1.5H7.5L10 4V13.2H1.8Z" fill="#fff" stroke="#8a8a8a" stroke-width="1.2"/><path d="M3.5 4.3H5.5M3.5 6.3H5.5M3.5 8.3H7M3.5 10.3H7" stroke="#5b8ac4" stroke-width="0.9"/><path d="M7.5 5.5H13L16.5 9V16.5H7.5Z" fill="#fff" stroke="#6d6d6d" stroke-width="1.3" stroke-linejoin="round"/><path d="M13 5.5V9H16.5" fill="none" stroke="#6d6d6d" stroke-width="1.2"/><path d="M9.2 9.5H11.2M9.2 11.5H11.2M9.2 13.5H15M9.2 15.3H15" stroke="#2e6db4" stroke-width="1"/></svg>
<svg style="left:124px;top:60px" width="36" height="36" viewBox="0 0 36 36"><path d="M3.5 3.5H32.5V32.5H26" fill="none" stroke="#333" stroke-width="1" stroke-dasharray="2 2"/><path d="M3.5 10V3.5" fill="none" stroke="#333" stroke-width="1" stroke-dasharray="2 2"/><path d="M22 10.5H3.5V32.5H25.5V14.3" fill="#fff" stroke="#666" stroke-width="1.1"/><path d="M5 22Q9 21 13 23T24 26.8V31H5Z" fill="#86c5a5"/><circle cx="18.9" cy="15.9" r="3" fill="#ecb05c"/><path d="M23.5 12.5L29 7" stroke="#2e6db4" stroke-width="2.3"/><path d="M23.5 5.8H30.2V12.5Z" fill="#2e6db4"/></svg>
<svg style="left:182px;top:60px" width="36" height="36" viewBox="0 0 36 36"><path d="M20.5 3.5H3.5V30.5H18" fill="#dde3f8" stroke="#666" stroke-width="1.1"/><rect x="4" y="4" width="16.5" height="26" fill="#dde3f8"/><path d="M20.5 3.5H30.5V17" fill="none" stroke="#333" stroke-width="1" stroke-dasharray="2 2"/><path d="M4.1 23Q12 23.5 20.5 19V30H4.1Z" fill="#86c5a5"/><circle cx="11.4" cy="10.3" r="4.5" fill="#ecb05c"/><rect x="21.2" y="20.5" width="9" height="9" fill="#fff"/><path d="M21.3 19.6V32.4M18 29.6H31.2M30.2 16.4V30.6M20.3 20.6H32.5" fill="none" stroke="#1a1a1a" stroke-width="2"/></svg>
<svg style="left:231px;top:60px" width="38" height="36" viewBox="0 0 38 36"><clipPath id="cvc"><path d="M3 2.4H35V33.6H3Z M9 8V28H29V8Z" clip-rule="evenodd"/></clipPath><g clip-path="url(#cvc)" stroke="#cdcdcd" stroke-width="1"><path d="M-28 34L3 3" /><path d="M-24 34L7 3" /><path d="M-20 34L11 3" /><path d="M-16 34L15 3" /><path d="M-12 34L19 3" /><path d="M-8 34L23 3" /><path d="M-4 34L27 3" /><path d="M0 34L31 3" /><path d="M4 34L35 3" /><path d="M8 34L39 3" /><path d="M12 34L43 3" /><path d="M16 34L47 3" /><path d="M20 34L51 3" /><path d="M24 34L55 3" /><path d="M28 34L59 3" /><path d="M32 34L63 3" /></g><rect x="3.2" y="2.6" width="31.3" height="30.8" fill="none" stroke="#555" stroke-width="1.1" stroke-dasharray="2.2 1.6"/><rect x="9.5" y="8.4" width="18.9" height="19.2" fill="#fff" stroke="#555" stroke-width="1.5"/><g fill="#2e6db4"><circle cx="14.2" cy="13.2" r="2.4"/><circle cx="17.6" cy="12" r="2.9"/><circle cx="20.6" cy="13.4" r="2.1"/><rect x="12" y="13" width="10.6" height="2.4" rx="1.2"/></g><path d="M16 26.5L24.3 15.5L27.6 19.5V26.5Z" fill="#2e6db4"/><path d="M11 26.5V20.8L14.3 17.6L21.5 26.5Z" fill="#2e6db4" stroke="#fff" stroke-width="0.7"/><rect x="10.3" y="26" width="17.5" height="1" fill="#2e6db4"/></svg>
<svg style="left:300px;top:58px" width="38" height="38" viewBox="0 0 38 38"><polygon points="2.36,31.66 6.04,35.34 29.64,11.94 25.96,8.26" fill="#fff" stroke="#4a4a4a" stroke-width="1.2" stroke-linejoin="round"/><polygon points="9.20,24.87 12.88,28.55 22.09,19.43 18.41,15.75" fill="#6d6d6d" stroke="#4a4a4a" stroke-width="1.2"/><polygon points="13.70,4.10 15.08,6.90 18.17,7.35 15.93,9.53 16.46,12.60 13.70,11.15 10.94,12.60 11.47,9.53 9.23,7.35 12.32,6.90" fill="#eba84a" stroke="#eba84a" stroke-width="0.6" stroke-linejoin="round"/><polygon points="31.20,3.70 32.14,5.61 34.24,5.91 32.72,7.39 33.08,9.49 31.20,8.50 29.32,9.49 29.68,7.39 28.16,5.91 30.26,5.61" fill="#eba84a" stroke="#eba84a" stroke-width="0.6" stroke-linejoin="round"/><polygon points="29.70,17.10 30.85,19.42 33.41,19.79 31.55,21.60 31.99,24.16 29.70,22.95 27.41,24.16 27.85,21.60 25.99,19.79 28.55,19.42" fill="#eba84a" stroke="#eba84a" stroke-width="0.6" stroke-linejoin="round"/></svg>
<svg style="left:366px;top:58px" width="38" height="38" viewBox="0 0 38 38"><path d="M23.8 5L27 4.6L28.4 32L23.6 31.2Z M24 4.8L26 6.8L10 26.5L7 25.5Z M15.2 17.8L23.4 20.6L23.2 23L14.2 20.4Z M3.8 24.6L12.2 27.2L11.6 29.4L3.8 26.8Z M20 30L30 33.2L29.6 35.2L20 32.2Z" fill="#2e6db4"/></svg>
<svg style="left:421px;top:58px" width="40" height="40" viewBox="0 0 40 40"><rect x="4.2" y="4.2" width="28.5" height="28.5" fill="#fff" stroke="#6d6d6d" stroke-width="1.3"/><path d="M6 19.2Q10 18.5 15 21Q20 24 26 25.4V31H6Z" fill="#86c5a5"/><circle cx="24.3" cy="11.4" r="4.4" fill="#ecb05c"/><path d="M18 25.5H24.5V33H18Z" fill="#fff"/><path d="M19 26.8H27.6L25 22H29.6L36 28.9L29.6 35.8H25L27.6 31H19Z" fill="#2e6db4"/></svg>
<svg style="left:484px;top:59px" width="38" height="38" viewBox="0 0 38 38"><rect x="4" y="4" width="14" height="14" fill="#ecb05c"/><rect x="20" y="4" width="14" height="14" fill="#2e6db4"/><rect x="4" y="20" width="14" height="14" fill="#d9462e"/><rect x="20" y="20" width="14" height="14" fill="#3d9e6c"/><path d="M6.5 14.5Q6 11.5 8.5 11.3Q9.5 8.5 12.5 9Q14.5 9.5 14.8 11.5Q16.2 12 15.8 14.5Z" fill="#fff"/><circle cx="27" cy="11" r="5" fill="none" stroke="#fff" stroke-width="1.3" stroke-dasharray="2.5 1.5"/><circle cx="27" cy="10.5" r="1.6" fill="#fff"/><ellipse cx="11" cy="30" rx="3.2" ry="2.5" fill="#fff"/><circle cx="7" cy="26.5" r="1.2" fill="#fff"/><circle cx="9.5" cy="23.8" r="1.2" fill="#fff"/><circle cx="12.5" cy="23.8" r="1.2" fill="#fff"/><circle cx="15" cy="26.5" r="1.2" fill="#fff"/><path d="M27 21.5L29 24.5L32.5 24L31 27L32.5 30L29 29.5L27 32.5L25 29.5L21.5 30L23 27L21.5 24L25 24.5Z" fill="#fff"/></svg>
<svg style="left:561px;top:58px" width="40" height="40" viewBox="0 0 40 40"><circle cx="19.8" cy="18.6" r="13.4" fill="none" stroke="#2e6db4" stroke-width="2.6"/><ellipse cx="19.7" cy="18.6" rx="5" ry="13.4" fill="none" stroke="#2e6db4" stroke-width="2.1"/><path d="M6.5 14.4H33M6.5 22.8H33" stroke="#2e6db4" stroke-width="2.1"/><path d="M25.6 15.8H32.4V22.8H38V25L29 37L20 25V22.8H25.6Z" fill="#fafafa"/><path d="M27 18H31V24.5H36L29 35L22 24.5H27Z" fill="#3fa06e"/></svg>
<svg style="left:643px;top:59px" width="38" height="38" viewBox="0 0 38 38"><circle cx="19" cy="18.9" r="15" fill="#3a76b6"/><path d="M14 11.1L28 18.9L14 26.9Z" fill="#fff"/></svg>
<svg style="left:704px;top:58px" width="40" height="40" viewBox="0 0 40 40"><circle cx="21.6" cy="12.8" r="9.8" fill="none" stroke="#666" stroke-width="2.8"/><path d="M6 31L14.5 23.2" stroke="#666" stroke-width="3.8" stroke-linecap="round"/><circle cx="28.5" cy="27.9" r="9" fill="#fafafa"/><circle cx="28.5" cy="27.9" r="6.8" fill="#fff" stroke="#2e6db4" stroke-width="1.6"/><ellipse cx="28.5" cy="27.9" rx="2.6" ry="6.8" fill="none" stroke="#2e6db4" stroke-width="1.3"/><path d="M22 25.5H35M22 30.3H35M28.5 21V34.7" stroke="#2e6db4" stroke-width="1.3"/></svg>
<svg style="left:782px;top:60px" width="40" height="40" viewBox="0 0 40 40"><path d="M5.1 12.2Q10 13.5 10.8 15.5V22.5Q10 24.8 5.1 25.8Z" fill="#3a76b6"/><rect x="12" y="9.9" width="22.8" height="18.9" rx="1.6" fill="#3a76b6"/><path d="M16.5 9.8L21 5.6H29" fill="none" stroke="#3a76b6" stroke-width="2.6" stroke-linecap="round"/><path d="M18.8 23.8H26.8L22.8 18.4H27.6L38.6 26.6L27 35.2H23L26.8 30H18.8Z" fill="#fafafa"/><path d="M20.2 25.2H29L24.8 19.6H27.2L36.6 26.6L26.3 33.8H23.8L29 28.1H20.2Z" fill="#3a76b6"/></svg>
<svg style="left:9px;top:150px" width="18" height="18" viewBox="0 0 18 18"><rect x="0" y="0" width="14.2" height="15" rx="1.2" fill="#5d5d5d"/><rect x="1.6" y="2.0" width="2.2" height="1.2" fill="#fff"/><rect x="10.4" y="2.0" width="2.2" height="1.2" fill="#fff"/><rect x="1.6" y="4.2" width="2.2" height="1.2" fill="#fff"/><rect x="10.4" y="4.2" width="2.2" height="1.2" fill="#fff"/><rect x="1.6" y="6.4" width="2.2" height="1.2" fill="#fff"/><rect x="10.4" y="6.4" width="2.2" height="1.2" fill="#fff"/><rect x="1.6" y="8.6" width="2.2" height="1.2" fill="#fff"/><rect x="10.4" y="8.6" width="2.2" height="1.2" fill="#fff"/><rect x="1.6" y="10.8" width="2.2" height="1.2" fill="#fff"/><rect x="10.4" y="10.8" width="2.2" height="1.2" fill="#fff"/><rect x="1.6" y="13.0" width="2.2" height="1.2" fill="#fff"/><rect x="10.4" y="13.0" width="2.2" height="1.2" fill="#fff"/><rect x="4.6" y="1.6" width="5" height="11.8" fill="#fff"/><rect x="5.2" y="2.5" width="3.8" height="3.8" fill="#b6dcf8"/><rect x="5.2" y="8.2" width="3.8" height="3.8" fill="#b6dcf8"/><path d="M6.5 10H14.5V13H6.5Z" fill="#fff"/><path d="M7 10.2H12.6V6.8L17.6 11.5L12.6 16.2V12.8H7Z" fill="#2e6db4"/></svg>
<svg style="left:9px;top:172px" width="18" height="18" viewBox="0 0 18 18"><rect x="0" y="0" width="14.2" height="15" rx="1.2" fill="#5d5d5d"/><rect x="1.6" y="2.0" width="2.2" height="1.2" fill="#fff"/><rect x="10.4" y="2.0" width="2.2" height="1.2" fill="#fff"/><rect x="1.6" y="4.2" width="2.2" height="1.2" fill="#fff"/><rect x="10.4" y="4.2" width="2.2" height="1.2" fill="#fff"/><rect x="1.6" y="6.4" width="2.2" height="1.2" fill="#fff"/><rect x="10.4" y="6.4" width="2.2" height="1.2" fill="#fff"/><rect x="1.6" y="8.6" width="2.2" height="1.2" fill="#fff"/><rect x="10.4" y="8.6" width="2.2" height="1.2" fill="#fff"/><rect x="1.6" y="10.8" width="2.2" height="1.2" fill="#fff"/><rect x="10.4" y="10.8" width="2.2" height="1.2" fill="#fff"/><rect x="1.6" y="13.0" width="2.2" height="1.2" fill="#fff"/><rect x="10.4" y="13.0" width="2.2" height="1.2" fill="#fff"/><rect x="4.6" y="1.6" width="5" height="11.8" fill="#fff"/><rect x="5.2" y="2.5" width="3.8" height="3.8" fill="#b6dcf8"/><rect x="5.2" y="8.2" width="3.8" height="3.8" fill="#b6dcf8"/><circle cx="11.2" cy="10.7" r="5.4" fill="#3a9e6a" stroke="#f3f4f6" stroke-width="0.8"/><path d="M11.2 7.8V13.6M8.3 10.7H14.1" stroke="#fff" stroke-width="1.7"/></svg>
<svg style="left:9px;top:201px" width="18" height="18" viewBox="0 0 18 18"><rect x="0" y="0" width="14.2" height="15" rx="1.2" fill="#5d5d5d"/><rect x="1.6" y="2.0" width="2.2" height="1.2" fill="#fff"/><rect x="10.4" y="2.0" width="2.2" height="1.2" fill="#fff"/><rect x="1.6" y="4.2" width="2.2" height="1.2" fill="#fff"/><rect x="10.4" y="4.2" width="2.2" height="1.2" fill="#fff"/><rect x="1.6" y="6.4" width="2.2" height="1.2" fill="#fff"/><rect x="10.4" y="6.4" width="2.2" height="1.2" fill="#fff"/><rect x="1.6" y="8.6" width="2.2" height="1.2" fill="#fff"/><rect x="10.4" y="8.6" width="2.2" height="1.2" fill="#fff"/><rect x="1.6" y="10.8" width="2.2" height="1.2" fill="#fff"/><rect x="10.4" y="10.8" width="2.2" height="1.2" fill="#fff"/><rect x="1.6" y="13.0" width="2.2" height="1.2" fill="#fff"/><rect x="10.4" y="13.0" width="2.2" height="1.2" fill="#fff"/><rect x="4.6" y="1.6" width="5" height="11.8" fill="#fff"/><rect x="5.2" y="2.5" width="3.8" height="3.8" fill="#b6dcf8"/><rect x="5.2" y="8.2" width="3.8" height="3.8" fill="#b6dcf8"/><circle cx="10.8" cy="10.8" r="5.4" fill="#d9462e" stroke="#f3f4f6" stroke-width="0.8"/><path d="M8 10.8H13.6" stroke="#fff" stroke-width="1.8"/></svg>
<svg style="left:9px;top:230px" width="18" height="18" viewBox="0 0 18 18"><rect x="0" y="0" width="14.2" height="15" rx="1.2" fill="#5d5d5d"/><rect x="1.6" y="2.0" width="2.2" height="1.2" fill="#fff"/><rect x="10.4" y="2.0" width="2.2" height="1.2" fill="#fff"/><rect x="1.6" y="4.2" width="2.2" height="1.2" fill="#fff"/><rect x="10.4" y="4.2" width="2.2" height="1.2" fill="#fff"/><rect x="1.6" y="6.4" width="2.2" height="1.2" fill="#fff"/><rect x="10.4" y="6.4" width="2.2" height="1.2" fill="#fff"/><rect x="1.6" y="8.6" width="2.2" height="1.2" fill="#fff"/><rect x="10.4" y="8.6" width="2.2" height="1.2" fill="#fff"/><rect x="1.6" y="10.8" width="2.2" height="1.2" fill="#fff"/><rect x="10.4" y="10.8" width="2.2" height="1.2" fill="#fff"/><rect x="1.6" y="13.0" width="2.2" height="1.2" fill="#fff"/><rect x="10.4" y="13.0" width="2.2" height="1.2" fill="#fff"/><rect x="4.6" y="1.6" width="5" height="11.8" fill="#fff"/><rect x="5.2" y="2.5" width="3.8" height="3.8" fill="#b6dcf8"/><rect x="5.2" y="8.2" width="3.8" height="3.8" fill="#b6dcf8"/><rect x="6.8" y="6.6" width="8.4" height="9.4" fill="#f3f4f6"/><rect x="7.6" y="7.2" width="7.4" height="8.8" fill="#5d5d5d"/><rect x="9.4" y="8" width="3.8" height="3.2" fill="#b6dcf8"/><rect x="9.4" y="12" width="3.8" height="3.2" fill="#b6dcf8"/><path d="M8.3 8.2V15.3M14.3 8.2V15.3" stroke="#fff" stroke-width="0.8" stroke-dasharray="0.9 1.1"/></svg>
<svg style="left:9px;top:258px" width="16" height="18" viewBox="0 0 16 18"><path d="M8 16.5V4" stroke="#a8a8a8" stroke-width="2.6"/><path d="M2 9.5L8 3.5L14 9.5" fill="none" stroke="#a8a8a8" stroke-width="2.6"/></svg>
<svg style="left:8px;top:280px" width="16" height="18" viewBox="0 0 16 18"><path d="M8 1V14" stroke="#2e6db4" stroke-width="2.6"/><path d="M2 8.5L8 14.5L14 8.5" fill="none" stroke="#2e6db4" stroke-width="2.6"/></svg>
<svg style="left:8px;top:309px" width="20" height="18" viewBox="0 0 20 18"><rect x="1.5" y="1.5" width="12.6" height="12.6" fill="#fff" stroke="#5d5d5d" stroke-width="1.2"/><circle cx="10" cy="5" r="2" fill="#ecb05c"/><path d="M2.2 8.5Q6 8.5 9 11V13.4H2.2Z" fill="#86c5a5"/><path d="M7 15.5L16.5 7" stroke="#f3f4f6" stroke-width="4.8"/><path d="M7.5 15L16.3 7.2" stroke="#2e6db4" stroke-width="3"/><path d="M5.8 16.8L7 14.3L8.4 15.6Z" fill="#2e6db4"/></svg>
<svg style="left:8px;top:337px" width="18" height="19" viewBox="0 0 18 19"><path d="M2.5 16L15.5 4.5" stroke="#5d5d5d" stroke-width="3.8" stroke-linecap="round"/><path d="M12.8 7L15.5 4.5" stroke="#fff" stroke-width="2" /><circle cx="3.5" cy="3.8" r="1.6" fill="#eba84a"/><circle cx="9" cy="2.2" r="1.5" fill="#eba84a"/></svg>
<svg style="left:8px;top:359px" width="18" height="20" viewBox="0 0 18 20"><path d="M11.5 2L13 2L14 16.5L11.5 16.2Z M11.6 2L12.4 3.2L4.6 13.2L3.4 12.8Z M7 9L11.6 10.6L11.5 11.8L6.6 10.2Z M1.8 12.4L6.2 13.6L5.9 14.5L1.8 13.3Z M10 16L15.6 17.6L15.3 18.5L10 17Z" fill="#2e6db4"/></svg>
<svg style="left:8px;top:389px" width="18" height="18" viewBox="0 0 18 18"><rect x="1.6" y="1.6" width="5.6" height="5.6" fill="none" stroke="#2e6db4" stroke-width="2.1"/><rect x="1.6" y="10.2" width="5.6" height="5.6" fill="none" stroke="#2e6db4" stroke-width="2.1"/><rect x="10.2" y="1.6" width="5.6" height="5.6" fill="none" stroke="#2e6db4" stroke-width="2.1"/><rect x="10.2" y="10.2" width="5.6" height="5.6" fill="none" stroke="#2e6db4" stroke-width="2.1"/></svg>
<svg style="left:235px;top:184px" width="16" height="20" viewBox="0 0 16 20"><path d="M3.5 1.5V15.5L7 12L9.2 16.5L11.5 15.5L9.3 11H14Z" fill="#777"/><circle cx="9.8" cy="14.6" r="1.6" fill="#777"/></svg>
<svg style="left:261px;top:186px" width="16" height="16" viewBox="0 0 16 16"><rect x="1.6" y="0.8" width="13.4" height="13.6" fill="none" stroke="#111" stroke-width="1.3" stroke-dasharray="1.8 1.2"/><rect x="0.2" y="12.8" width="3" height="3" fill="#111"/></svg>
<svg style="left:233px;top:212px" width="18" height="20" viewBox="0 0 18 20"><path d="M1 10.8L9.5 4.3L14.6 10.5L7.8 17.8Z" fill="#8a8a8a"/><ellipse cx="8.8" cy="10.3" rx="1.9" ry="2.7" fill="#fff"/><path d="M6.2 2.3L7.2 1.8L9.2 10.4" fill="none" stroke="#222" stroke-width="1.2"/><path d="M12.2 7.2Q16.4 7 16.4 9.5V17.6" fill="none" stroke="#2e6db4" stroke-width="2.2"/></svg>
<svg style="left:260px;top:213px" width="18" height="17" viewBox="0 0 18 17"><defs><linearGradient id="gr1" x1="0" x2="1"><stop offset="0" stop-color="#555"/><stop offset="1" stop-color="#f4f8ff"/></linearGradient></defs><rect x="1.8" y="1.8" width="14.2" height="13.4" fill="url(#gr1)" stroke="#555" stroke-width="1.5"/></svg>
<svg style="left:233px;top:241px" width="18" height="18" viewBox="0 0 18 18"><path d="M2.2 16L16 2.2" stroke="#555" stroke-width="2.4" stroke-linecap="butt"/></svg>
<svg style="left:260px;top:241px" width="18" height="18" viewBox="0 0 18 18"><path d="M9 10L16.5 2.5" stroke="#666" stroke-width="3.4"/><path d="M7.8 9.5Q11.5 11 10 14.5Q8 17.5 2 17.2Q5 15.5 5 12.8Q5.5 9.5 7.8 9.5Z" fill="#2e6db4"/></svg>
<svg style="left:233px;top:270px" width="18" height="16" viewBox="0 0 18 16"><rect x="1.9" y="1.9" width="14.2" height="12.2" fill="none" stroke="#555" stroke-width="1.7"/></svg>
<span class="t" style="left:260.90px;top:271px;font-size:21px;letter-spacing:0.000px;color:#555;font-family:'Liberation Serif',serif;font-weight:bold">T</span>
<svg style="left:233px;top:298px" width="18" height="16" viewBox="0 0 18 16"><ellipse cx="8.5" cy="7.8" rx="7" ry="6" fill="none" stroke="#555" stroke-width="1.7"/></svg>
<svg style="left:260px;top:298px" width="18" height="16" viewBox="0 0 18 16"><rect x="1.9" y="1.9" width="14.2" height="12.2" rx="2.2" fill="none" stroke="#555" stroke-width="1.7"/></svg>
<svg style="left:233px;top:325px" width="18" height="18" viewBox="0 0 18 18"><path d="M1.5 16.5L9.5 8.5" stroke="#666" stroke-width="2.2" stroke-linecap="round"/><path d="M8 7L11.2 10.2" stroke="#2e6db4" stroke-width="2"/><path d="M10 5.5Q11.5 2.5 14.2 1.8Q16.5 2 16.4 4Q16 6.5 12.8 8.2Z" fill="#2e6db4"/></svg>
<svg style="left:260px;top:326px" width="18" height="17" viewBox="0 0 18 17"><path d="M1.2 9L10 2.5L16.8 2.5L16.8 7.5L8 14.5L1.2 14.5Z" fill="#fff"/><path d="M1.2 9.5H8.5V14.5H1.2Z" fill="#3a76b6"/><path d="M1.2 9L5 6H12.3L8.5 9.5Z" fill="#79a5d6"/><path d="M8.5 9.5L12.3 6V11.5L8.5 14.5Z" fill="#2b5e9a"/><path d="M5 6L10 2.5H16.8L12.3 6Z" fill="#e07060"/><path d="M12.3 6L16.8 2.5V7.5L12.3 11.5Z" fill="#d9462e"/></svg>
<svg style="left:233px;top:353px" width="18" height="18" viewBox="0 0 18 18"><rect x="1" y="1" width="5.6" height="15.5" fill="#d9462e"/><path d="M6 5.8H9.5L12.2 8.8L9.5 11.8H6Z" fill="#d9462e"/><path d="M9.8 1H16.8V16.5H9.8V13L13.8 8.8L9.8 4.6Z" fill="#2e6db4"/></svg>
<svg style="left:260px;top:353px" width="18" height="18" viewBox="0 0 18 18"><rect x="1" y="6" width="6.6" height="10.8" rx="1" fill="#3a76b6"/><rect x="2" y="3.5" width="4.6" height="2.8" fill="#ecb05c"/><rect x="3.3" y="1.6" width="2" height="2" fill="#666"/><path d="M2.6 8V13" stroke="#fff" stroke-width="0.9"/><rect x="9.0" y="1.8" width="1.5" height="1.5" fill="#3fa06e"/><rect x="9.0" y="4.4" width="1.5" height="1.5" fill="#3fa06e"/><rect x="11.6" y="1.8" width="1.5" height="1.5" fill="#3fa06e"/><rect x="11.6" y="4.4" width="1.5" height="1.5" fill="#3fa06e"/><rect x="14.2" y="1.8" width="1.5" height="1.5" fill="#3fa06e"/><rect x="14.2" y="4.4" width="1.5" height="1.5" fill="#3fa06e"/></svg>
<svg style="left:233px;top:381px" width="18" height="18" viewBox="0 0 18 18"><circle cx="7.2" cy="7.6" r="5.6" fill="#fff" stroke="#666" stroke-width="2"/><path d="M11.5 12L16 16.5" stroke="#666" stroke-width="2.6"/><path d="M7.2 4.6V10.6M4.2 7.6H10.2" stroke="#2e6db4" stroke-width="1.7"/></svg>
<svg style="left:260px;top:381px" width="18" height="18" viewBox="0 0 18 18"><circle cx="7.6" cy="7.6" r="5.6" fill="#fff" stroke="#666" stroke-width="2"/><path d="M11.9 12L16.4 16.5" stroke="#666" stroke-width="2.6"/><path d="M4.6 7.6H10.6" stroke="#2e6db4" stroke-width="1.7"/></svg>
<svg style="left:674px;top:532px" width="20" height="20" viewBox="0 0 20 20"><path d="M2.5 3.5H17.5V17.5H9" fill="none" stroke="#333" stroke-width="1" stroke-dasharray="1.6 1.4"/><path d="M2.5 3.5V8" fill="none" stroke="#333" stroke-width="1" stroke-dasharray="1.6 1.4"/><path d="M11 7.5H2.5V17.5H13V10" fill="#fff" stroke="#666" stroke-width="1"/><path d="M3.5 13Q7 12.5 12 15V17H3.5Z" fill="#86c5a5"/><circle cx="8.6" cy="10.6" r="1.7" fill="#ecb05c"/><path d="M11 9.5L15.5 5" stroke="#2e6db4" stroke-width="1.5"/><path d="M12.5 4H16.6V8.1Z" fill="#2e6db4"/></svg>
<svg style="left:674px;top:569px" width="20" height="20" viewBox="0 0 20 20"><path d="M2.5 2.5H17.5V13.5H8L5 16.5V13.5H2.5Z" fill="#fff" stroke="#6d6d6d" stroke-width="1.1" stroke-linejoin="round"/><path d="M5 5.5H15M5 8H15M5 10.5H12" stroke="#2e6db4" stroke-width="1.1"/></svg></div></body></html>
